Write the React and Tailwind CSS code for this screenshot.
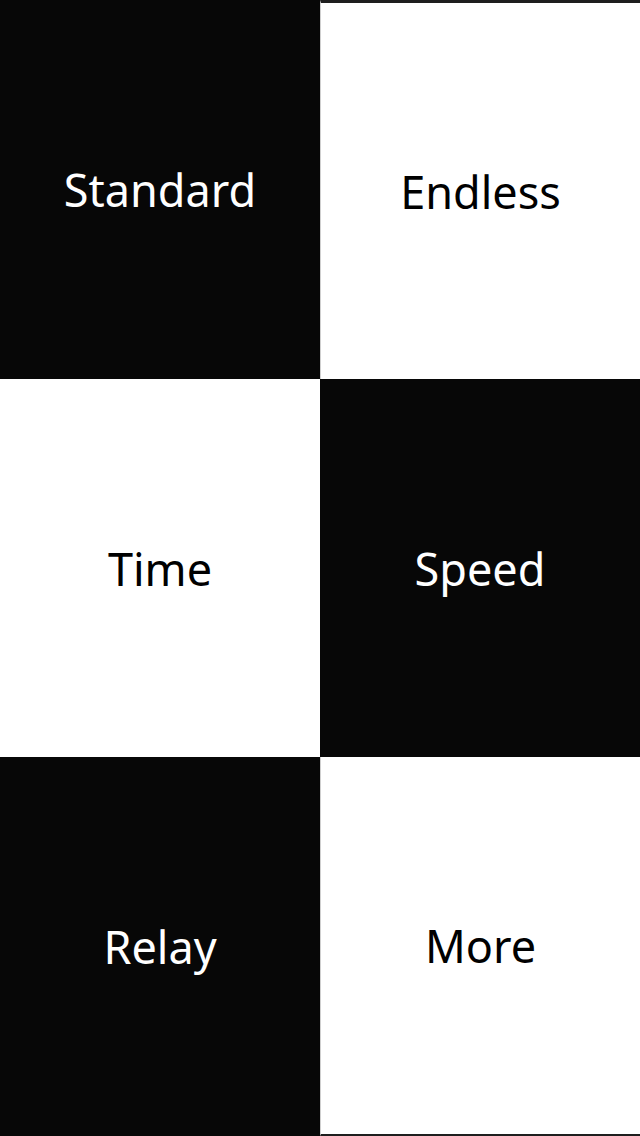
import React from 'react';

const tiles = [
  { label: 'Standard', dark: true },
  { label: 'Endless', dark: false },
  { label: 'Time', dark: false },
  { label: 'Speed', dark: true },
  { label: 'Relay', dark: true },
  { label: 'More', dark: false },
];

const Tile = ({ label, dark, index }) => (
  <button
    className={`flex items-center justify-center ${dark ? 'bg-[#070707] text-white' : 'bg-white text-black'} ${
      index === 1 || index === 5 ? 'border-l border-l-[#cfcfcf]' : ''
    } ${index === 1 ? 'border-t-[3px] border-t-[#1e1e1e]' : ''} ${index === 5 ? 'border-b-2 border-b-[#1e1e1e]' : ''}`}
  >
    <span className="text-[45px] leading-none" style={{ fontFamily: '"Noto Sans", "Open Sans", sans-serif' }}>
      {label}
    </span>
  </button>
);

export default function App() {
  return (
    <div className="w-[640px] h-[1136px] grid grid-cols-2 grid-rows-[379px_378px_379px] bg-white overflow-hidden">
      {tiles.map((t, i) => (
        <Tile key={t.label} {...t} index={i} />
      ))}
    </div>
  );
}
